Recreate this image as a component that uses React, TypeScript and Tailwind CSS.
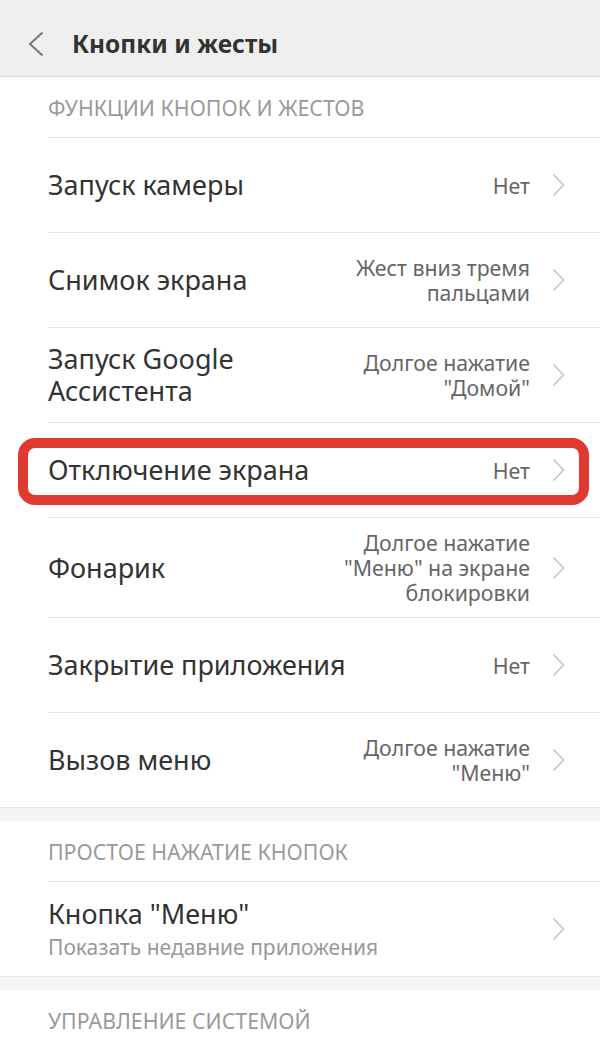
type Item = { title: string; value: string[]; h: string };

const gestures: Item[] = [
  { title: "Запуск камеры", value: ["Нет"], h: "h-[95px]" },
  { title: "Снимок экрана", value: ["Жест вниз тремя", "пальцами"], h: "h-[95px]" },
  { title: "Запуск Google\nАссистента", value: ["Долгое нажатие", "\"Домой\""], h: "h-[95px]" },
  { title: "Отключение экрана", value: ["Нет"], h: "h-[95px]" },
  { title: "Фонарик", value: ["Долгое нажатие", "\"Меню\" на экране", "блокировки"], h: "h-[100px]" },
  { title: "Закрытие приложения", value: ["Нет"], h: "h-[95px]" },
  { title: "Вызов меню", value: ["Долгое нажатие", "\"Меню\""], h: "h-[95px]" },
];

function Arrow() {
  return (
    <svg width="13" height="24" viewBox="0 0 13 24" className="shrink-0" fill="none">
      <polyline points="1.5,1.5 11.5,12 1.5,22.5" stroke="#c4c4c4" strokeWidth="1.6" />
    </svg>
  );
}

function Row({ item, highlighted }: { item: Item; highlighted?: boolean }) {
  return (
    <div className={`relative flex items-center border-t border-[#e6e6e6] pr-[35px] ${item.h}`}>
      <div className="flex-1 whitespace-pre-line text-[27px] leading-[32px] text-[#333]">{item.title}</div>
      <div className="mr-[22px] text-right text-[21.3px] leading-[25px] text-[#666]">
        {item.value.map((v) => (
          <div key={v}>{v}</div>
        ))}
      </div>
      <Arrow />
      {highlighted && (
        <div className="pointer-events-none absolute -left-[30px] right-[11px] top-[15px] bottom-[12px] rounded-[17px] border-[10px] border-[#e03a2e]" />
      )}
    </div>
  );
}

function SectionTitle({ children }: { children: string }) {
  return <div className="flex h-[60px] items-center pt-[2px] text-[21.3px] text-[#9a9a9a]">{children}</div>;
}

function Gap() {
  return <div className="h-[14px] border-t border-[#e8e8e8] bg-[#f5f5f5]" />;
}

export default function App() {
  return (
    <div className="h-[1038px] w-[600px] overflow-hidden bg-white font-['Noto_Sans',sans-serif]">
      <div className="flex h-[77px] items-center border-b border-[#dcdcdc] bg-[#efefef] pt-[12px]">
        <svg width="16" height="26" viewBox="0 0 16 26" className="ml-[28px]" fill="none">
          <polyline points="14.5,1.5 2,13 14.5,24.5" stroke="#777" strokeWidth="2" />
        </svg>
        <div className="ml-[28px] text-[24.5px] font-bold text-[#333]">Кнопки и жесты</div>
      </div>

      <div className="pl-[48px]">
        <SectionTitle>ФУНКЦИИ КНОПОК И ЖЕСТОВ</SectionTitle>
        {gestures.map((g, i) => (
          <Row key={g.title} item={g} highlighted={i === 3} />
        ))}
      </div>

      <Gap />

      <div className="pl-[48px]">
        <SectionTitle>ПРОСТОЕ НАЖАТИЕ КНОПОК</SectionTitle>
        <div className="flex h-[95px] items-center border-t border-[#e6e6e6] pr-[35px]">
          <div className="flex-1">
            <div className="text-[27px] leading-[32px] text-[#333]">Кнопка "Меню"</div>
            <div className="mt-[3px] text-[21px] leading-[28px] text-[#999]">Показать недавние приложения</div>
          </div>
          <Arrow />
        </div>
      </div>

      <Gap />

      <div className="pl-[48px]">
        <SectionTitle>УПРАВЛЕНИЕ СИСТЕМОЙ</SectionTitle>
      </div>
    </div>
  );
}
